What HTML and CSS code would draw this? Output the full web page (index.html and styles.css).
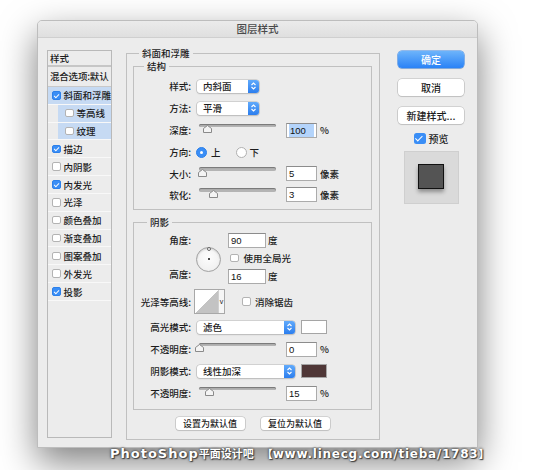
FILE: index.html
```html
<!DOCTYPE html>
<html lang="zh-CN">
<head>
<meta charset="utf-8">
<title>图层样式</title>
<link rel="stylesheet" href="styles.css">
</head>
<body>
<div class="page">
  <div class="dialog">
    <div class="titlebar">图层样式</div>
    <div class="body">
      <div class="list">
        <div class="list-head">样式</div>
        <div class="list-blend">混合选项:默认</div>
        <div class="item sel"><span class="cb on"></span><span class="it">斜面和浮雕</span></div>
        <div class="item sub"><div class="subbox"><span class="cb"></span><span class="it">等高线</span></div></div>
        <div class="item sub"><div class="subbox"><span class="cb"></span><span class="it">纹理</span></div></div>
        <div class="item"><span class="cb on"></span><span class="it">描边</span></div>
        <div class="item"><span class="cb"></span><span class="it">内阴影</span></div>
        <div class="item"><span class="cb on"></span><span class="it">内发光</span></div>
        <div class="item"><span class="cb"></span><span class="it">光泽</span></div>
        <div class="item"><span class="cb"></span><span class="it">颜色叠加</span></div>
        <div class="item"><span class="cb"></span><span class="it">渐变叠加</span></div>
        <div class="item"><span class="cb"></span><span class="it">图案叠加</span></div>
        <div class="item"><span class="cb"></span><span class="it">外发光</span></div>
        <div class="item"><span class="cb on"></span><span class="it">投影</span></div>
      </div>

      <div class="main">
        <div class="group outer">
          <div class="gtitle t-outer">斜面和浮雕</div>

          <div class="group inner struct">
            <div class="gtitle t-struct">结构</div>
            <div class="row">
              <span class="lbl">样式:</span>
              <div class="select s62"><span class="stext">内斜面</span><span class="stepper"><svg width="7" height="10" viewBox="0 0 7 10"><polyline points="1.5,4 3.5,2 5.5,4" fill="none" stroke="#fff" stroke-width="1.1"/><polyline points="1.5,6 3.5,8 5.5,6" fill="none" stroke="#fff" stroke-width="1.1"/></svg></span></div>
            </div>
            <div class="row">
              <span class="lbl">方法:</span>
              <div class="select s62"><span class="stext">平滑</span><span class="stepper"><svg width="7" height="10" viewBox="0 0 7 10"><polyline points="1.5,4 3.5,2 5.5,4" fill="none" stroke="#fff" stroke-width="1.1"/><polyline points="1.5,6 3.5,8 5.5,6" fill="none" stroke="#fff" stroke-width="1.1"/></svg></span></div>
            </div>
            <div class="row">
              <span class="lbl">深度:</span>
              <div class="slider"><div class="track"></div><svg class="thumb" style="left:4px" width="9" height="8" viewBox="0 0 9 8"><polygon points="4.5,0.5 8.5,3.5 8.5,7.5 0.5,7.5 0.5,3.5" fill="#f4f4f4" stroke="#8a8a8a"/></svg></div>
              <div class="input"><span class="hl">100</span></div>
              <span class="unit">%</span>
            </div>
            <div class="row">
              <span class="lbl">方向:</span>
              <span class="radio on"></span><span class="rtext">上</span>
              <span class="radio r2"></span><span class="rtext r2t">下</span>
            </div>
            <div class="row short">
              <span class="lbl">大小:</span>
              <div class="slider"><div class="track"></div><svg class="thumb" style="left:-1px" width="9" height="8" viewBox="0 0 9 8"><polygon points="4.5,0.5 8.5,3.5 8.5,7.5 0.5,7.5 0.5,3.5" fill="#f4f4f4" stroke="#8a8a8a"/></svg></div>
              <div class="input">5</div>
              <span class="unit">像素</span>
            </div>
            <div class="row short">
              <span class="lbl">软化:</span>
              <div class="slider"><div class="track"></div><svg class="thumb" style="left:10px" width="9" height="8" viewBox="0 0 9 8"><polygon points="4.5,0.5 8.5,3.5 8.5,7.5 0.5,7.5 0.5,3.5" fill="#f4f4f4" stroke="#8a8a8a"/></svg></div>
              <div class="input">3</div>
              <span class="unit">像素</span>
            </div>
          </div>

          <div class="group inner shadow">
            <div class="gtitle t-shadow">阴影</div>
            <div class="angle">
              <span class="lbl a1">角度:</span>
              <div class="dial"><span class="dial-knob"></span><span class="dial-dot"></span></div>
              <div class="a3"><div class="input w38">90</div><span class="unit u2">度</span></div>
              <div class="a4"><span class="cb"></span><span class="ctext">使用全局光</span></div>
              <span class="lbl a5">高度:</span>
              <div class="a6"><div class="input w38">16</div><span class="unit u2">度</span></div>
            </div>
            <div class="row contour-row">
              <span class="lbl">光泽等高线:</span>
              <div class="contour"><div class="curve"></div><div class="drop">v</div></div>
              <span class="cb cb-aa"></span><span class="ctext">消除锯齿</span>
            </div>
            <div class="row">
              <span class="lbl">高光模式:</span>
              <div class="select s98"><span class="stext">滤色</span><span class="stepper"><svg width="7" height="10" viewBox="0 0 7 10"><polyline points="1.5,4 3.5,2 5.5,4" fill="none" stroke="#fff" stroke-width="1.1"/><polyline points="1.5,6 3.5,8 5.5,6" fill="none" stroke="#fff" stroke-width="1.1"/></svg></span></div>
              <span class="swatch white"></span>
            </div>
            <div class="row">
              <span class="lbl">不透明度:</span>
              <div class="slider"><div class="track"></div><svg class="thumb" style="left:-4px" width="9" height="8" viewBox="0 0 9 8"><polygon points="4.5,0.5 8.5,3.5 8.5,7.5 0.5,7.5 0.5,3.5" fill="#f4f4f4" stroke="#8a8a8a"/></svg></div>
              <div class="input">0</div>
              <span class="unit">%</span>
            </div>
            <div class="row">
              <span class="lbl">阴影模式:</span>
              <div class="select s98"><span class="stext">线性加深</span><span class="stepper"><svg width="7" height="10" viewBox="0 0 7 10"><polyline points="1.5,4 3.5,2 5.5,4" fill="none" stroke="#fff" stroke-width="1.1"/><polyline points="1.5,6 3.5,8 5.5,6" fill="none" stroke="#fff" stroke-width="1.1"/></svg></span></div>
              <span class="swatch brown"></span>
            </div>
            <div class="row">
              <span class="lbl">不透明度:</span>
              <div class="slider"><div class="track"></div><svg class="thumb" style="left:6px" width="9" height="8" viewBox="0 0 9 8"><polygon points="4.5,0.5 8.5,3.5 8.5,7.5 0.5,7.5 0.5,3.5" fill="#f4f4f4" stroke="#8a8a8a"/></svg></div>
              <div class="input">15</div>
              <span class="unit">%</span>
            </div>
          </div>

          <div class="btnrow">
            <div class="sbtn">设置为默认值</div>
            <div class="sbtn">复位为默认值</div>
          </div>
        </div>
      </div>

      <div class="side">
        <div class="btn primary">确定</div>
        <div class="btn">取消</div>
        <div class="btn">新建样式...</div>
        <div class="preview-row"><span class="pcb"></span><span class="ptext">预览</span></div>
        <div class="preview"><div class="psq"></div></div>
      </div>
    </div>
  </div>
  <div class="watermark"><span class="wm-lat">PhotoShop</span><span class="wm-cjk">平面设计吧</span><span class="wm-url"><span class="wm-br">【</span>www.linecg.com/tieba/1783<span class="wm-br">】</span></span></div>
</div>
</body>
</html>
```

FILE: styles.css
```css
* { box-sizing: border-box; margin: 0; padding: 0; }
html, body { width: 533px; height: 470px; overflow: hidden; background: #fff; }
body {
  font-family: "Noto Sans CJK SC", "Noto Sans", sans-serif;
  font-size: 9.5px;
  font-weight: 500;
  color: #1c1c1c;
}
.page { position: relative; width: 533px; height: 470px; padding: 20px 0 0 37px; }

.dialog {
  width: 441px;
  height: 428px;
  background: #ececec;
  border: 1px solid #bdbdbd;
  border-radius: 5px 5px 0 0;
  box-shadow: 0 14px 36px rgba(0, 0, 0, 0.5);
}
.titlebar {
  height: 17px;
  border-bottom: 1px solid #cfcfcf;
  background: linear-gradient(#ebebeb, #dfdfdf);
  border-radius: 4px 4px 0 0;
  text-align: center;
  font-size: 10.5px;
  line-height: 16px;
  color: #4a4a4a;
}
.body { display: flex; padding: 12px 13px 0 9px; }

/* left list */
.list {
  width: 65px;
  height: 388px;
  border: 1px solid #b9b9b9;
  background: #ececec;
  flex: none;
}
.list-head {
  height: 16px;
  line-height: 14px;
  padding-left: 2px;
  border-bottom: 2px solid #c6c6c6;
}
.list-blend {
  height: 20px;
  line-height: 18px;
  padding-left: 2px;
  border-bottom: 1px solid #c9c9c9;
  white-space: nowrap;
  letter-spacing: -0.2px;
}
.item {
  display: flex;
  align-items: center;
  height: 17.83px;
  border-bottom: 1px solid #f8f8f8;
  padding-left: 4px;
  white-space: nowrap;
}
.item.sel { background: #c6daf3; }
.item.sub { padding-left: 10px; }
.subbox {
  flex: 1;
  align-self: stretch;
  display: flex;
  align-items: center;
  background: #c6daf3;
  padding-left: 7px;
}
.it { margin-left: 3px; }

.cb {
  position: relative;
  flex: none;
  width: 8.5px;
  height: 8.5px;
  border-radius: 2px;
  background: #fff;
  border: 1px solid #b3b3b3;
}
.cb.on { background: #3a8ef6; border-color: #2c80ea; }
.cb.on::after {
  content: "";
  position: absolute;
  left: 2.3px;
  top: 0.4px;
  width: 2px;
  height: 4.2px;
  border: solid #fff;
  border-width: 0 1.2px 1.2px 0;
  transform: rotate(45deg);
}

/* main */
.main { margin-left: 14px; width: 254px; padding-top: 3px; flex: none; }
.group { border: 1px solid #c0c0c0; }
.outer { height: 387px; padding: 0 7px 0 6px; }
.gtitle {
  display: table;
  height: 12px;
  line-height: 12px;
  margin-top: -7px;
  padding: 0 3px;
  background: #ececec;
  white-space: nowrap;
}
.t-outer { margin-left: 6px; }
.t-struct { margin-left: 10px; }
.t-shadow { margin-left: 13px; }

.struct { margin-top: 7px; padding: 0 0 4px 0; }
.struct .gtitle + .row { margin-top: 3px; }
.shadow { margin-top: 12px; padding: 4px 0 5px 0; }
.shadow .gtitle { margin-bottom: 4px; margin-top: -11px; }

.row { display: flex; align-items: center; height: 22px; white-space: nowrap; }
.row.short { height: 21px; }
.lbl { width: 57px; flex: none; text-align: right; }

.select {
  display: flex;
  height: 13px;
  margin-left: 6px;
  background: #fff;
  border-radius: 3px;
  box-shadow: 0 0 0 0.6px #b8b8b8, 0 1px 1.5px rgba(0, 0, 0, 0.18);
  flex: none;
}
.s62 { width: 62px; }
.s98 { width: 98px; }
.stext { flex: 1; padding-left: 6px; line-height: 13px; font-size: 9.5px; }
.stepper {
  width: 11px;
  border-radius: 0 3px 3px 0;
  background: linear-gradient(#61aafb, #2c7eee);
  display: flex;
  align-items: center;
  justify-content: center;
}

.slider { position: relative; width: 77px; height: 15px; margin-left: 8px; flex: none; }
.track {
  margin-top: 1px;
  height: 3.5px;
  border-radius: 2px;
  background: #b4b4b4;
  box-shadow: inset 0 1px 1px rgba(0, 0, 0, 0.35);
}
.thumb { position: absolute; top: 2.5px; }

.input {
  width: 31px;
  height: 15px;
  margin-left: 10px;
  flex: none;
  background: #fff;
  border: 1px solid #ababab;
  border-top-color: #8c8c8c;
  font-family: "Liberation Sans", Arial, sans-serif;
  font-size: 9.5px;
  font-weight: normal;
  line-height: 13px;
  padding-left: 2px;
  color: #111;
}
.input.w38 { width: 38px; margin-left: 0; }
.hl { background: #b4d4fb; padding: 0 8px 0 1px; display: inline-block; line-height: 13px; }
.unit { margin-left: 3px; }
.unit.u2 { margin-left: 2px; }

.radio {
  width: 11px;
  height: 11px;
  border-radius: 50%;
  margin-left: 5px;
  background: #fff;
  border: 1px solid #b0b0b0;
  flex: none;
  position: relative;
}
.radio.on { background: #3a8ef6; border-color: #2c80ea; }
.radio.on::after {
  content: "";
  position: absolute;
  left: 3px;
  top: 3px;
  width: 3px;
  height: 3px;
  border-radius: 50%;
  background: #fff;
}
.rtext { margin-left: 4px; }
.radio.r2 { margin-left: 15px; }
.rtext.r2t { margin-left: 3px; }

/* angle block */
.angle {
  display: grid;
  grid-template-columns: 57px 37px auto;
  grid-template-rows: 16px 17px 16px;
  row-gap: 1.5px;
  align-items: center;
}
.a1 { grid-column: 1; grid-row: 1; }
.a5 { grid-column: 1; grid-row: 3; margin-top: -4px; }
.dial {
  grid-column: 2;
  grid-row: 1 / 4;
  width: 25px;
  height: 25px;
  margin-left: 5px;
  margin-top: 2px;
  border-radius: 50%;
  border: 1px solid #a2a2a2;
  background: radial-gradient(circle at 50% 40%, #fdfdfd, #ececec);
  box-shadow: inset 0 1px 2px rgba(0, 0, 0, 0.15);
  position: relative;
}
.dial-knob {
  position: absolute;
  left: 9.5px;
  top: -0.5px;
  width: 4px;
  height: 4px;
  border-radius: 50%;
  border: 0.8px solid #666;
  background: #fff;
}
.dial-dot {
  position: absolute;
  left: 10.5px;
  top: 10.5px;
  width: 2px;
  height: 2px;
  border-radius: 50%;
  background: #111;
}
.a3, .a4, .a6 { grid-column: 3; display: flex; align-items: center; white-space: nowrap; }
.a3 { grid-row: 1; }
.a4 { grid-row: 2; padding-left: 2px; }
.a6 { grid-row: 3; }
.ctext { margin-left: 5px; }

.contour-row { height: 29px; margin-top: 3px; }
.contour {
  display: flex;
  width: 31px;
  height: 25px;
  margin-left: 3px;
  border: 1px solid #a8a8a8;
  background: #fff;
  flex: none;
}
.curve { width: 23px; background: linear-gradient(to bottom right, #ffffff 50%, #c3c3c3 50%); }
.drop {
  flex: 1;
  border-left: 1px solid #cfcfcf;
  background: #f6f6f6;
  font-family: "Liberation Sans", Arial, sans-serif;
  font-size: 7px;
  line-height: 23px;
  text-align: center;
  color: #222;
}
.cb-aa { margin-left: 17px; width: 9px; height: 9px; }
.contour-row .ctext { margin-left: 4px; }

.swatch { width: 26px; height: 14px; margin-left: 6px; border: 1px solid #a5a5a5; flex: none; }
.swatch.white { background: #fff; }
.swatch.brown { background: #4f3737; }

.btnrow { display: flex; justify-content: center; gap: 16px; margin-top: 7px; }
.sbtn {
  width: 69px;
  height: 13px;
  background: #fff;
  border-radius: 3px;
  box-shadow: 0 0 0 0.6px #b8b8b8, 0 1px 1px rgba(0, 0, 0, 0.15);
  text-align: center;
  line-height: 13px;
  font-size: 9px;
}

/* side */
.side {
  margin-left: 18px;
  width: 66px;
  flex: none;
  display: flex;
  flex-direction: column;
  align-items: center;
  padding-top: 1px;
}
.btn {
  width: 66px;
  height: 17px;
  margin-bottom: 11px;
  background: #fff;
  border-radius: 4px;
  box-shadow: 0 0 0 0.6px #b8b8b8, 0 1px 1px rgba(0, 0, 0, 0.15);
  text-align: center;
  line-height: 17px;
  font-size: 10px;
}
.btn.primary {
  background: linear-gradient(#6db4fb, #2a82f6);
  box-shadow: 0 0 0 0.6px #3a86e6, 0 1px 1px rgba(0, 0, 0, 0.15);
  color: #fff;
}
.btn:nth-child(3) { margin-bottom: 8px; }
.preview-row { display: flex; align-items: center; height: 12px; }
.pcb {
  width: 12px;
  height: 11px;
  border-radius: 2.5px;
  background: #3a8ef6;
  position: relative;
}
.pcb::after {
  content: "";
  position: absolute;
  left: 3.8px;
  top: 1px;
  width: 2.6px;
  height: 5.8px;
  border: solid #fff;
  border-width: 0 1.4px 1.4px 0;
  transform: rotate(45deg);
}
.ptext { margin-left: 3px; font-size: 10px; }
.preview {
  margin-top: 7px;
  width: 55px;
  height: 53px;
  background: #dadada;
  border: 1px solid #cfcfcf;
  display: flex;
  align-items: center;
  justify-content: center;
}
.psq {
  width: 26px;
  height: 25px;
  margin-top: -2px;
  background: #545454;
  border: 1px solid #111;
  box-shadow: 0 3px 4px rgba(0, 0, 0, 0.35);
}

/* watermark overlay */
.watermark {
  position: absolute;
  left: 110px;
  top: 445px;
  white-space: nowrap;
  color: #fff;
  font-family: "DejaVu Sans", sans-serif;
  font-weight: bold;
  font-size: 13px;
  line-height: 16px;
  text-shadow: 0 0 1.5px #333, 1px 1px 1px #444, 0 0 3px rgba(0, 0, 0, 0.5);
}
.wm-lat { letter-spacing: 1px; }
.wm-cjk { font-family: "Noto Sans CJK SC", sans-serif; font-size: 11px; font-weight: bold; }
.wm-url { margin-left: 8px; font-size: 12px; letter-spacing: 0.75px; }
.wm-br { font-family: "Noto Sans CJK SC", sans-serif; font-size: 11px; font-weight: bold; letter-spacing: 0; }
```
